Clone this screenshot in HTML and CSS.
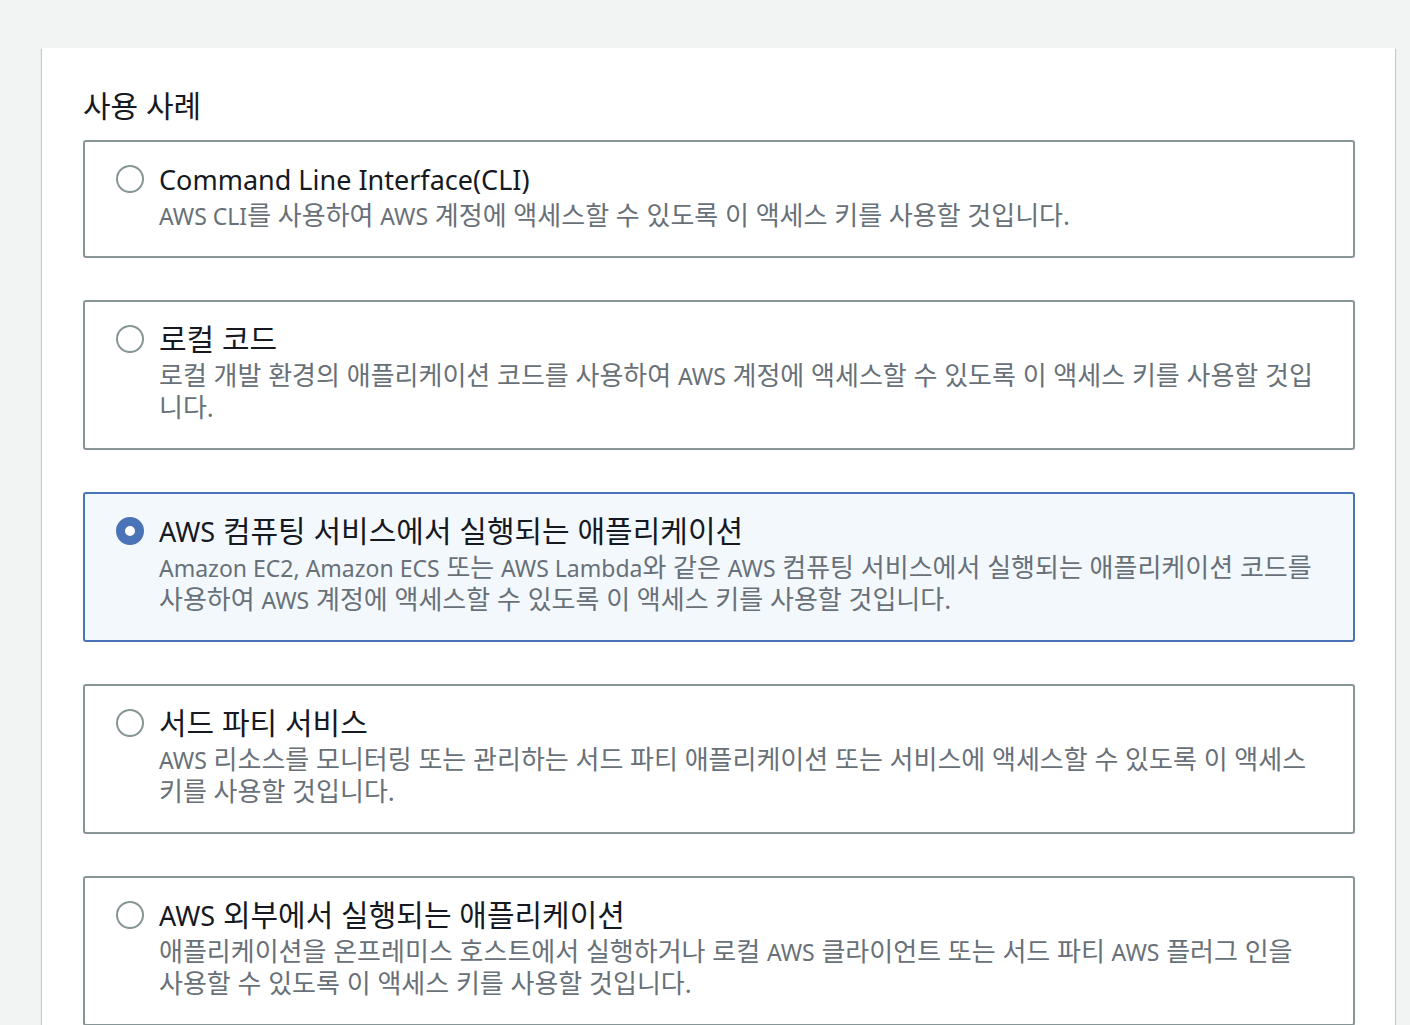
FILE: index.html
```html
<!DOCTYPE html>
<html lang="ko">
<head>
<meta charset="utf-8">
<link rel="stylesheet" href="styles.css">
</head>
<body>
<div class="page">
  <div class="panel">
    <h2 class="heading">사용 사례</h2>
    <div class="options">
      <div class="card">
        <span class="radio"></span>
        <div class="text">
          <div class="title"><span class="en">Command Line Interface(CLI)</span></div>
          <div class="desc"><span class="en">AWS CLI</span>를 사용하여 <span class="en">AWS</span> 계정에 액세스할 수 있도록 이 액세스 키를 사용할 것입니다.</div>
        </div>
      </div>
      <div class="card">
        <span class="radio"></span>
        <div class="text">
          <div class="title">로컬 코드</div>
          <div class="desc">로컬 개발 환경의 애플리케이션 코드를 사용하여 <span class="en">AWS</span> 계정에 액세스할 수 있도록 이 액세스 키를 사용할 것입니다.</div>
        </div>
      </div>
      <div class="card selected">
        <span class="radio checked"></span>
        <div class="text">
          <div class="title"><span class="en">AWS</span> 컴퓨팅 서비스에서 실행되는 애플리케이션</div>
          <div class="desc"><span class="en">Amazon EC2, Amazon ECS</span> 또는 <span class="en">AWS Lambda</span>와 같은 <span class="en">AWS</span> 컴퓨팅 서비스에서 실행되는 애플리케이션 코드를 사용하여 <span class="en">AWS</span> 계정에 액세스할 수 있도록 이 액세스 키를 사용할 것입니다.</div>
        </div>
      </div>
      <div class="card">
        <span class="radio"></span>
        <div class="text">
          <div class="title">서드 파티 서비스</div>
          <div class="desc"><span class="en">AWS</span> 리소스를 모니터링 또는 관리하는 서드 파티 애플리케이션 또는 서비스에 액세스할 수 있도록 이 액세스 키를 사용할 것입니다.</div>
        </div>
      </div>
      <div class="card">
        <span class="radio"></span>
        <div class="text">
          <div class="title"><span class="en">AWS</span> 외부에서 실행되는 애플리케이션</div>
          <div class="desc">애플리케이션을 온프레미스 호스트에서 실행하거나 로컬 <span class="en">AWS</span> 클라이언트 또는 서드 파티 <span class="en">AWS</span> 플러그 인을 사용할 수 있도록 이 액세스 키를 사용할 것입니다.</div>
        </div>
      </div>
    </div>
  </div>
</div>
</body>
</html>
```

FILE: styles.css
```css
html, body {
  margin: 0;
  padding: 0;
  background: #f2f3f3;
  height: 100%;
  overflow: hidden;
}
body {
  font-family: "Noto Sans", "Noto Sans CJK KR", sans-serif;
  color: #16191f;
}
.page {
  padding: 48px 15px 0 42px;
}
.panel {
  background: #fff;
  box-shadow: 0 1px 1px 0 rgba(0,28,36,0.3), 1px 1px 1px 0 rgba(0,28,36,0.15), -1px 1px 1px 0 rgba(0,28,36,0.15);
  padding: 40px 40px 40px 41px;
  min-height: 1200px;
}
.heading {
  margin: 0 0 16px 0;
  font-size: 30px;
  line-height: 36px;
  font-weight: 400;
  color: #16191f;
}
.options {
  display: flex;
  flex-direction: column;
  gap: 42px;
}
.card {
  display: flex;
  align-items: flex-start;
  border: 2px solid #879596;
  border-radius: 3px;
  padding: 19px 32px 25px 31px;
  background: #fff;
}
.card.selected {
  border-color: #4a74b7;
  background: #f3f8fd;
}
.radio {
  flex: none;
  width: 24px;
  height: 24px;
  border: 2px solid #879596;
  border-radius: 50%;
  margin-top: 4px;
  margin-right: 15px;
  background: #fff;
  box-sizing: content-box;
}
.radio.checked {
  border: 9px solid #4a74b7;
  width: 10px;
  height: 10px;
}
.text {
  flex: 1;
  min-width: 0;
}
.title {
  height: 36px;
  font-size: 30px;
  line-height: 36px;
  color: #16191f;
}
.title .en {
  font-size: 27px;
  line-height: 1;
}
.desc {
  margin-top: 2px;
  font-size: 26px;
  line-height: 32px;
  color: #687078;
}
.desc .en {
  font-size: 23px;
  line-height: 1;
}
```
